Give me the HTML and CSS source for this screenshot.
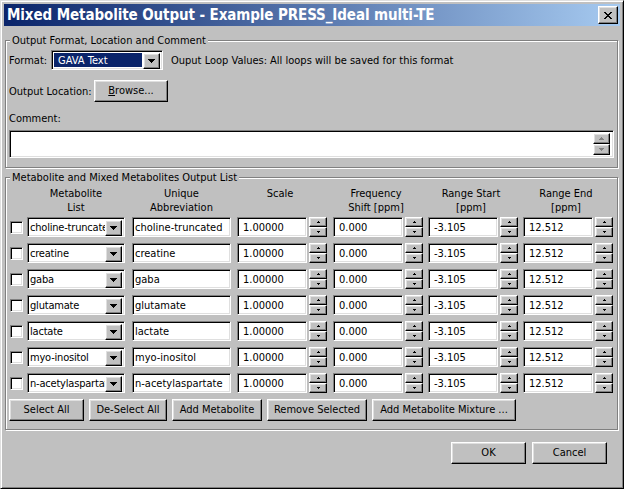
FILE: index.html
```html
<!DOCTYPE html>
<html>
<head>
<meta charset="utf-8">
<link rel="stylesheet" href="styles.css">
</head>
<body>
<div class="window">
  <div class="titlebar">
    <span class="title">Mixed Metabolite Output - Example PRESS_Ideal multi-TE</span>
    <span class="close-btn"><svg class="close-x" width="8" height="7" viewBox="0 0 8 7"><path d="M0 0h2v1h1v1h2V1h1V0h2v1H7v1H6v1H5v1h1v1h1v1h1v1H6V6H5V5H3v1H2v1H0V6h1V5h1V4h1V3H2V2H1V1H0z"/></svg></span>
  </div>
  <div class="client">
    <div class="group g1">
      <span class="group-title">Output Format, Location and Comment</span>
      <div class="fmt-row">
        <span class="fmt-label">Format:</span>
        <div class="combo combo-fmt">
          <span class="combo-text sel">GAVA Text</span>
          <span class="drop-btn"><svg width="7" height="4" viewBox="0 0 7 4"><path d="M0 0h7v1H6v1H5v1H4v1H3V3H2V2H1V1H0z"/></svg></span>
        </div>
        <span class="loop-label">Ouput Loop Values:</span>
        <span class="loop-val">All loops will be saved for this format</span>
      </div>
      <div class="loc-row">
        <span class="loc-label">Output Location:</span>
        <button class="btn browse"><u>B</u>rowse...</button>
      </div>
      <div class="comment-label">Comment:</div>
      <div class="field comment">
        <div class="vscroll">
          <span class="sbtn small"><svg width="5" height="3" viewBox="0 0 5 3"><path class="dis" d="M2 0h1v1h1v1h1v1H0V2h1V1h1z"/></svg></span>
          <span class="sbtn small"><svg width="5" height="3" viewBox="0 0 5 3"><path class="dis" d="M0 0h5v1H4v1H3v1H2V2H1V1H0z"/></svg></span>
        </div>
      </div>
    </div>

    <div class="group g2">
      <span class="group-title">Metabolite and Mixed Metabolites Output List</span>
      <div class="grid head">
        <span></span>
        <span class="h h-combo">Metabolite<br>List</span>
        <span class="h h-abbr">Unique<br>Abbreviation</span>
        <span class="h h-num">Scale</span>
        <span class="h h-num">Frequency<br>Shift [ppm]</span>
        <span class="h h-num">Range Start<br>[ppm]</span>
        <span class="h h-num">Range End<br>[ppm]</span>
      </div>
      <div class="grid rows" id="rows"></div>
      <div class="btn-row">
        <button class="btn b-sel">Select All</button>
        <button class="btn b-desel">De-Select All</button>
        <button class="btn b-add">Add Metabolite</button>
        <button class="btn b-rem">Remove Selected</button>
        <button class="btn b-mix">Add Metabolite Mixture ...</button>
      </div>
    </div>

    <div class="footer">
      <button class="btn b-ok">OK</button>
      <button class="btn b-cancel">Cancel</button>
    </div>
  </div>
</div>
<script>
(function () {
  var names = [
    ["choline-truncated", "choline-truncated"],
    ["creatine", "creatine"],
    ["gaba", "gaba"],
    ["glutamate", "glutamate"],
    ["lactate", "lactate"],
    ["myo-inositol", "myo-inositol"],
    ["n-acetylaspartate", "n-acetylaspartate"]
  ];
  var down7 = '<svg width="7" height="4" viewBox="0 0 7 4"><path d="M0 0h7v1H6v1H5v1H4v1H3V3H2V2H1V1H0z"/></svg>';
  var up3 = '<svg width="3" height="2" viewBox="0 0 3 2"><path d="M1 0h1v1h1v1H0V1h1z"/></svg>';
  var dn3 = '<svg width="3" height="2" viewBox="0 0 3 2"><path d="M0 0h3v1H2v1H1V1H0z"/></svg>';
  function num(v) {
    return '<div class="num"><span class="field nfield">' + v + '</span>' +
      '<span class="spin"><span class="sbtn">' + up3 + '</span><span class="sbtn">' + dn3 + '</span></span></div>';
  }
  var html = '';
  names.forEach(function (n) {
    html += '<span class="check"></span>' +
      '<div class="combo"><span class="combo-text">' + n[0] + '</span><span class="drop-btn">' + down7 + '</span></div>' +
      '<span class="field afield">' + n[1] + '</span>' +
      num('1.00000') + num('0.000') + num('-3.105') + num('12.512');
  });
  document.getElementById('rows').innerHTML = html;
})();
</script>
</body>
</html>
```

FILE: styles.css
```css
* { box-sizing: border-box; }
html, body { margin: 0; padding: 0; }
body {
  width: 624px;
  height: 489px;
  overflow: hidden;
  background: #c0c0c0;
  font-family: "DejaVu Sans Condensed", "DejaVu Sans", sans-serif;
  font-size: 11px;
  color: #000;
}
.window {
  width: 624px;
  height: 489px;
  background: #c0c0c0;
  border: 1px solid;
  border-color: #dfdfdf #000 #000 #dfdfdf;
  box-shadow: inset 1px 1px #fff, inset -1px -1px #808080;
  padding: 3px;
  display: flex;
  flex-direction: column;
}
.titlebar {
  height: 22px;
  flex: none;
  background: linear-gradient(to right, #0a246a, #a6caf0);
  display: flex;
  align-items: center;
  padding: 0 2px 0 3px;
  color: #fff;
}
.title {
  flex: 1;
  font-weight: bold;
  font-size: 15px;
  letter-spacing: -0.1px;
  white-space: nowrap;
  overflow: hidden;
}
.close-btn {
  width: 20px;
  height: 18px;
  flex: none;
  display: flex;
  align-items: center;
  justify-content: center;
  background: #c0c0c0;
  border: 1px solid;
  border-color: #fff #000 #000 #fff;
  box-shadow: inset -1px -1px #808080, inset 1px 1px #dfdfdf;
}
.close-x { fill: #000; }

.client {
  flex: 1;
  display: flex;
  flex-direction: column;
  padding: 0 2px 0 1px;
}
.group {
  position: relative;
  border: 1px solid #808080;
  box-shadow: inset 1px 1px #fff, 1px 1px #fff;
}
.group-title {
  position: absolute;
  top: -7px;
  left: 4px;
  padding: 0 2px;
  line-height: 13px;
  background: #c0c0c0;
  white-space: nowrap;
}

/* sunken field */
.field, .combo, .check {
  background: #fff;
  border: 1px solid;
  border-color: #808080 #fff #fff #808080;
  box-shadow: inset 1px 1px #000, inset -1px -1px #dfdfdf;
}
/* raised button */
.btn, .sbtn, .drop-btn {
  background: #c0c0c0;
  border: 1px solid;
  border-color: #fff #000 #000 #fff;
  box-shadow: inset -1px -1px #808080, inset 1px 1px #dfdfdf;
}
.btn {
  font: inherit;
  color: #000;
  padding: 0;
  margin: 0;
  height: 22px;
  line-height: 18px;
  text-align: center;
  white-space: nowrap;
}

/* group 1 */
.g1 {
  margin-top: 14px;
  padding: 9px 3px 9px 3px;
}
.fmt-row {
  display: flex;
  align-items: center;
  height: 20px;
}
.fmt-label { width: 42px; flex: none; }
.combo {
  height: 20px;
  display: flex;
  align-items: stretch;
  padding: 2px;
  overflow: hidden;
}
.combo-fmt { width: 112px; flex: none; }
.combo-text {
  flex: 1;
  min-width: 0;
  overflow: hidden;
  white-space: nowrap;
  line-height: 16px;
  padding-left: 0;
}
.combo-text.sel {
  background: #0a246a;
  color: #fff;
  padding-left: 4px;
  margin-right: 1px;
}
.drop-btn {
  width: 17px;
  height: 16px;
  flex: none;
  display: flex;
  align-items: center;
  justify-content: center;
}
.drop-btn svg { fill: #000; }
.loop-label { margin-left: 8px; }
.loop-val { margin-left: 3px; }

.loc-row {
  display: flex;
  align-items: center;
  height: 22px;
  margin-top: 10px;
}
.loc-label { width: 85px; flex: none; }
.browse { width: 74px; }

.comment-label {
  margin-top: 10px;
  height: 14px;
  line-height: 14px;
}
.comment {
  margin-top: 4px;
  height: 28px;
  display: flex;
  justify-content: flex-end;
  padding: 2px 3px 2px 2px;
}
.vscroll {
  width: 17px;
  display: flex;
  flex-direction: column;
}
.sbtn {
  flex: 1;
  display: flex;
  align-items: center;
  justify-content: center;
}
.sbtn svg { fill: #000; }
.sbtn .dis { fill: #808080; }

/* group 2 */
.g2 {
  margin-top: 9px;
  padding: 9px 0 8px 4px;
}
.grid {
  display: grid;
  grid-template-columns: 17px 105px 105px 96px 95px 95px 90px;
}
.head {
  height: 28px;
  margin-bottom: 2px;
  line-height: 14px;
}
.h { text-align: center; }
.h-combo { width: 98px; }
.h-abbr { width: 99px; }
.h-num { width: 90px; padding-right: 4px; }

.rows {
  grid-auto-rows: 20px;
  row-gap: 6px;
}
.check {
  width: 13px;
  height: 13px;
  align-self: center;
}
.rows .combo { width: 98px; }
.rows .combo-text { padding-left: 0; letter-spacing: -0.2px; }
.afield {
  width: 99px;
  height: 20px;
  padding: 2px;
  line-height: 16px;
  white-space: nowrap;
  overflow: hidden;
}
.num {
  width: 90px;
  display: flex;
  gap: 2px;
}
.nfield {
  width: 70px;
  height: 20px;
  padding: 2px 2px 2px 5px;
  line-height: 16px;
  white-space: nowrap;
}
.spin {
  width: 18px;
  height: 20px;
  display: flex;
  flex-direction: column;
}

.btn-row {
  display: flex;
  gap: 5px;
  margin-top: 6px;
  margin-left: -1px;
}
.b-sel { width: 75px; }
.b-desel { width: 78px; }
.b-add { width: 90px; }
.b-rem { width: 100px; }
.b-mix { width: 144px; }

.footer {
  display: flex;
  justify-content: flex-end;
  gap: 6px;
  margin-top: 12px;
  margin-right: 11px;
}
.b-ok, .b-cancel { width: 75px; }
```
